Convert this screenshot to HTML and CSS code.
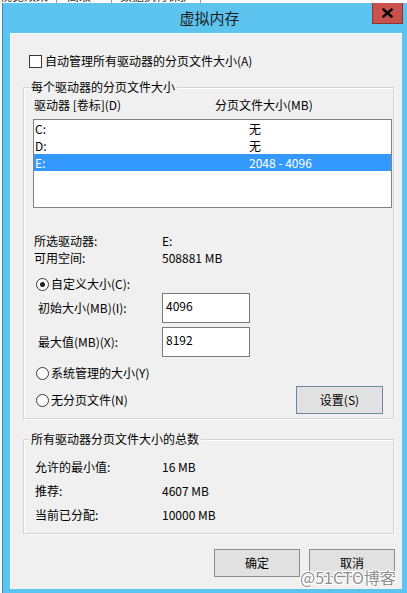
FILE: index.html
```html
<!DOCTYPE html>
<html lang="zh-CN">
<head>
<meta charset="utf-8">
<title>虚拟内存</title>
<link rel="stylesheet" href="styles.css">
</head>
<body>
<div class="tabstrip">
  <div class="tabs">
    <span class="tab tab-first">视觉效果</span>
    <span class="tab tab-sel">高级</span>
    <span class="tab">数据执行保护</span>
  </div>
</div>
<div class="window">
  <div class="titlebar">
    <div class="title">虚拟内存</div>
    <div class="close">
      <svg width="11" height="10" viewBox="0 0 11 10"><path d="M1.5 1.5 L9.5 8.5 M9.5 1.5 L1.5 8.5" stroke="#000" stroke-width="2.4" stroke-linecap="square" fill="none"/></svg>
    </div>
  </div>
  <div class="client">
    <div class="check-row"><span class="checkbox"></span><span>自动管理所有驱动器的分页文件大小(A)</span></div>

    <div class="group group-drives">
      <div class="legend">每个驱动器的分页文件大小</div>
      <div class="list-header"><span>驱动器 [卷标](D)</span><span>分页文件大小(MB)</span></div>
      <div class="listbox">
        <div class="list-row"><span>C:</span><span>无</span></div>
        <div class="list-row"><span>D:</span><span>无</span></div>
        <div class="list-row selected"><span>E:</span><span>2048 - 4096</span></div>
      </div>
      <div class="info">
        <div class="info-row"><span>所选驱动器:</span><span>E:</span></div>
        <div class="info-row"><span>可用空间:</span><span>508881 MB</span></div>
      </div>
      <div class="radio-row radio-custom"><span class="radio checked"></span><span>自定义大小(C):</span></div>
      <div class="field-row"><span class="field-label">初始大小(MB)(I):</span><div class="input">4096</div></div>
      <div class="field-row field-second"><span class="field-label">最大值(MB)(X):</span><div class="input">8192</div></div>
      <div class="radio-row radio-system"><span class="radio"></span><span>系统管理的大小(Y)</span></div>
      <div class="last-row">
        <div class="radio-row"><span class="radio"></span><span>无分页文件(N)</span></div>
        <div class="button button-set">设置(S)</div>
      </div>
    </div>

    <div class="group group-total">
      <div class="legend">所有驱动器分页文件大小的总数</div>
      <div class="totals">
        <div class="total-row"><span>允许的最小值:</span><span>16 MB</span></div>
        <div class="total-row"><span>推荐:</span><span>4607 MB</span></div>
        <div class="total-row"><span>当前已分配:</span><span>10000 MB</span></div>
      </div>
    </div>

    <div class="actions">
      <div class="button">确定</div>
      <div class="button">取消</div>
    </div>

    <div class="watermark">@51CTO博客</div>
  </div>
</div>
</body>
</html>
```
FILE: styles.css
```css
* { box-sizing: border-box; }

html, body {
  margin: 0;
  padding: 0;
}

body {
  width: 407px;
  height: 593px;
  overflow: hidden;
  background: #ffffff;
  font-family: "Noto Sans CJK SC", "Microsoft YaHei", "Noto Sans", sans-serif;
  font-size: 12px;
  line-height: 16px;
  color: #000;
}

/* background dialog tabs, barely visible at the very top */
.tabstrip {
  height: 3px;
  overflow: hidden;
  background: #fff;
}
.tabs {
  display: flex;
  margin-top: -12px;
  color: #333;
}
.tab {
  padding: 0 8px 0 8px;
  border-right: 1px solid #9a9a9a;
  line-height: 16px;
}
.tab-first { padding-left: 0; }
.tab-sel { padding: 0 20px 0 10px; }

/* dialog window */
.window {
  width: 408px;
  margin-left: 2px;
  background: #5cc4ef;
  border-left: 1px solid #3d8db8;
  border-right: 1px solid #3d8db8;
  padding: 0 7px 7px 7px;
}

.titlebar {
  height: 30px;
  display: flex;
  align-items: flex-start;
}
.title {
  flex: 1;
  text-align: center;
  padding-left: 37px;
  padding-right: 0;
  line-height: 30px;
  font-size: 15px;
  color: #1c1c1c;
}
.close {
  width: 31px;
  height: 21px;
  margin-right: -1px;
  background: #c8514b;
  border: 1px solid #8e3430;
  border-top: none;
  display: flex;
  align-items: center;
  justify-content: center;
}

.client {
  position: relative;
  width: 392px;
  background: #f0f0f0;
  padding: 20px 0 12px 0;
  box-shadow: inset 1px 1px 0 #fbfbfb;
}

/* checkbox */
.check-row {
  display: flex;
  align-items: center;
  gap: 3px;
  height: 16px;
  margin-left: 19px;
}
.checkbox {
  width: 13px;
  height: 13px;
  border: 1px solid #3a3a3a;
  background: #fff;
  flex: none;
}

/* group boxes */
.group {
  margin: 18px 8px 0 13px;
  border: 1px solid #d3d3d3;
  box-shadow: inset 1px 1px 0 #fdfdfd, 1px 1px 0 #fdfdfd;
  padding: 0 0 4px 10px;
  display: flex;
  flex-direction: column;
}
.group-total {
  margin-top: 20px;
  padding-bottom: 6px;
}
.legend {
  align-self: flex-start;
  margin: -9px 0 0 -5px;
  padding: 0 2px;
  background: #f0f0f0;
  line-height: 16px;
}

.list-header {
  margin-top: 2px;
  display: grid;
  grid-template-columns: 181px auto;
}

.listbox {
  margin: 6px 0 0 -1px;
  width: 359px;
  height: 89px;
  border: 1px solid #828282;
  background: #fff;
}
.list-row {
  height: 17px;
  line-height: 17px;
  display: grid;
  grid-template-columns: 214px auto;
  padding-left: 1px;
}
.list-row.selected {
  background: #3399ff;
  color: #fff;
}

.info { margin-top: 24px; }
.info-row {
  display: grid;
  grid-template-columns: 128px auto;
  line-height: 17px;
}

/* radios */
.radio-row {
  display: flex;
  align-items: center;
  gap: 2px;
  height: 16px;
  margin-left: 2px;
}
.radio-custom { margin-top: 10px; }
.radio-system { margin-top: 8px; }
.radio {
  width: 13px;
  height: 13px;
  border-radius: 50%;
  border: 1px solid #3a3a3a;
  background: #fff;
  flex: none;
  display: flex;
  align-items: center;
  justify-content: center;
}
.radio.checked::after {
  content: "";
  width: 5px;
  height: 5px;
  border-radius: 50%;
  background: #1f1f1f;
}

/* text fields */
.field-row {
  display: flex;
  align-items: center;
  margin-top: 1px;
}
.field-second { margin-top: 4px; }
.field-label {
  width: 124px;
  margin-left: 4px;
}
.input {
  width: 88px;
  height: 30px;
  border: 1px solid #7a7a7a;
  background: #fff;
  padding: 4px 3px;
  line-height: 16px;
}

.last-row {
  margin-top: 5px;
  display: flex;
  align-items: center;
  justify-content: space-between;
}

/* buttons */
.button {
  height: 28px;
  background: #e1e1e1;
  border: 1px solid #8c8c8c;
  display: flex;
  align-items: center;
  justify-content: center;
}
.button-set {
  width: 87px;
  margin-right: 10px;
  border-color: #6f86aa;
}

/* totals */
.totals { margin: 8px 0 0 1px; }
.total-row {
  display: grid;
  grid-template-columns: 127px auto;
  height: 24px;
  line-height: 24px;
}

.actions {
  margin: 15px 7px 0 0;
  display: flex;
  justify-content: flex-end;
  gap: 9px;
}
.actions .button { width: 86px; }

.watermark {
  position: absolute;
  left: 290px;
  top: 534px;
  font-size: 16px;
  line-height: 20px;
  color: #8f8f8f;
  text-shadow: 0 0 1px #fff, 1px 1px 0 #fff, -1px -1px 0 #fff, 1px -1px 0 #fff, -1px 1px 0 #fff;
  white-space: nowrap;
}
```
